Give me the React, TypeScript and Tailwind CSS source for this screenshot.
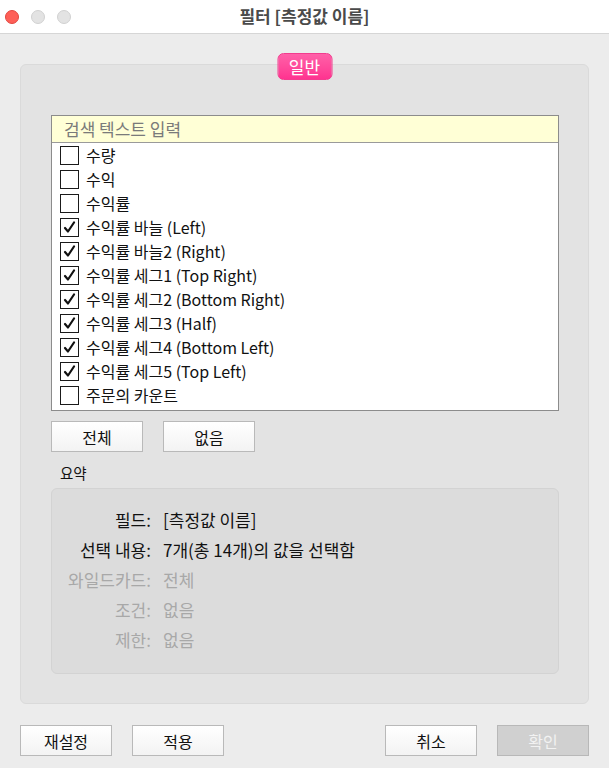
import React from "react";

const FONT = { fontFamily: '"Noto Sans CJK KR", "Noto Sans", sans-serif' };

const items: { label: string; checked: boolean }[] = [
    { label: "수량", checked: false },
    { label: "수익", checked: false },
    { label: "수익률", checked: false },
    { label: "수익률 바늘 (Left)", checked: true },
    { label: "수익률 바늘2 (Right)", checked: true },
    { label: "수익률 세그1 (Top Right)", checked: true },
    { label: "수익률 세그2 (Bottom Right)", checked: true },
    { label: "수익률 세그3 (Half)", checked: true },
    { label: "수익률 세그4 (Bottom Left)", checked: true },
    { label: "수익률 세그5 (Top Left)", checked: true },
    { label: "주문의 카운트", checked: false },
];

function CheckBox({ checked }: { checked: boolean }) {
    return (
        <div className="w-[19px] h-[19px] border-[1.5px] border-[#1a1a1a] bg-white flex items-center justify-center shrink-0">
            {checked && (
                <svg width="13" height="13" viewBox="0 0 13 13">
                    <path d="M2 7 L5 10.5 L11 1.5" fill="none" stroke="#111" strokeWidth="2.2" strokeLinecap="round" strokeLinejoin="round" />
                </svg>
            )}
        </div>
    );
}

function Btn({ children, disabled }: { children: React.ReactNode; disabled?: boolean }) {
    return (
        <button
            className={
                "w-[92px] h-[31px] border text-[16px] flex items-center justify-center " +
                (disabled
                    ? "bg-[#d0d0d0] border-[#b8b8b8] text-[#f2f2f2]"
                    : "bg-gradient-to-b from-white to-[#f3f3f3] border-[#b9b9b9] text-[#111]")
            }
        >
            {children}
        </button>
    );
}

function SummaryRow({ label, value, dim }: { label: string; value: string; dim?: boolean }) {
    return (
        <div className={"flex items-center h-[30px] text-[17px] " + (dim ? "text-[#a8a8a8]" : "text-[#111]")}>
            <div className="w-[99px] text-right whitespace-nowrap">{label}</div>
            <div className="pl-[12px] whitespace-nowrap">{value}</div>
        </div>
    );
}

export default function App() {
    return (
        <div className="w-[609px] h-[768px] bg-[#ececec] flex flex-col overflow-hidden" style={FONT}>
            {/* Title bar */}
            <div className="h-[34px] bg-white border-b border-[#d6d6d6] flex items-center relative shrink-0">
                <div className="flex gap-[12px] pl-[5px]">
                    <div className="w-[14px] h-[14px] rounded-full bg-[#fe5f57] border border-[#e2463f]" />
                    <div className="w-[14px] h-[14px] rounded-full bg-[#e3e3e3] border border-[#d1d1d1]" />
                    <div className="w-[14px] h-[14px] rounded-full bg-[#e3e3e3] border border-[#d1d1d1]" />
                </div>
                <div className="absolute inset-x-0 top-0 h-[31px] flex items-center justify-center text-[17px] font-bold text-[#4a4a4a] pointer-events-none">
                    필터 [측정값 이름]
                </div>
            </div>

            {/* Body */}
            <div className="px-5 pt-[30px]">
                <div className="relative bg-[#e3e3e3] border border-[#dadada] rounded-[6px] pl-[30px] pr-[29px] pt-[50px] pb-[29px]">
                    <div className="absolute left-1/2 -translate-x-1/2 -top-[12px] w-[55px] h-[27px] rounded-[6px] bg-gradient-to-b from-[#ff5fa8] to-[#ff3290] border border-[#f23c8e] text-white text-[17px] flex items-center justify-center">
                        일반
                    </div>

                    {/* List */}
                    <div className="border border-[#8c8c8c] bg-white h-[296px]">
                        <div className="h-[27px] bg-[#ffffd6] border-b border-[#9a9a9a] flex items-center pl-[12px] text-[17px] text-[#7a7a7a]">
                            검색 텍스트 입력
                        </div>
                        {items.map((it) => (
                            <div key={it.label} className="h-[24px] flex items-center pl-[8px] gap-[7px] text-[16px] text-[#111]">
                                <CheckBox checked={it.checked} />
                                <span className="whitespace-nowrap">{it.label}</span>
                            </div>
                        ))}
                    </div>

                    <div className="flex gap-[20px] mt-[10px]">
                        <Btn>전체</Btn>
                        <Btn>없음</Btn>
                    </div>

                    <div className="text-[14.5px] text-[#111] pl-[9px] mt-[8px] h-[26px] flex items-center">요약</div>

                    <div className="bg-[#dcdcdc] border border-[#d3d3d3] rounded-[6px] h-[186px] mt-[2px] pt-[16px]">
                        <SummaryRow label="필드:" value="[측정값 이름]" />
                        <SummaryRow label="선택 내용:" value="7개(총 14개)의 값을 선택함" />
                        <SummaryRow label="와일드카드:" value="전체" dim />
                        <SummaryRow label="조건:" value="없음" dim />
                        <SummaryRow label="제한:" value="없음" dim />
                    </div>
                </div>

                {/* Footer buttons */}
                <div className="flex items-center mt-[21px]">
                    <div className="flex gap-[20px]">
                        <Btn>재설정</Btn>
                        <Btn>적용</Btn>
                    </div>
                    <div className="ml-auto flex gap-[20px]">
                        <Btn>취소</Btn>
                        <Btn disabled>확인</Btn>
                    </div>
                </div>
            </div>
        </div>
    );
}
